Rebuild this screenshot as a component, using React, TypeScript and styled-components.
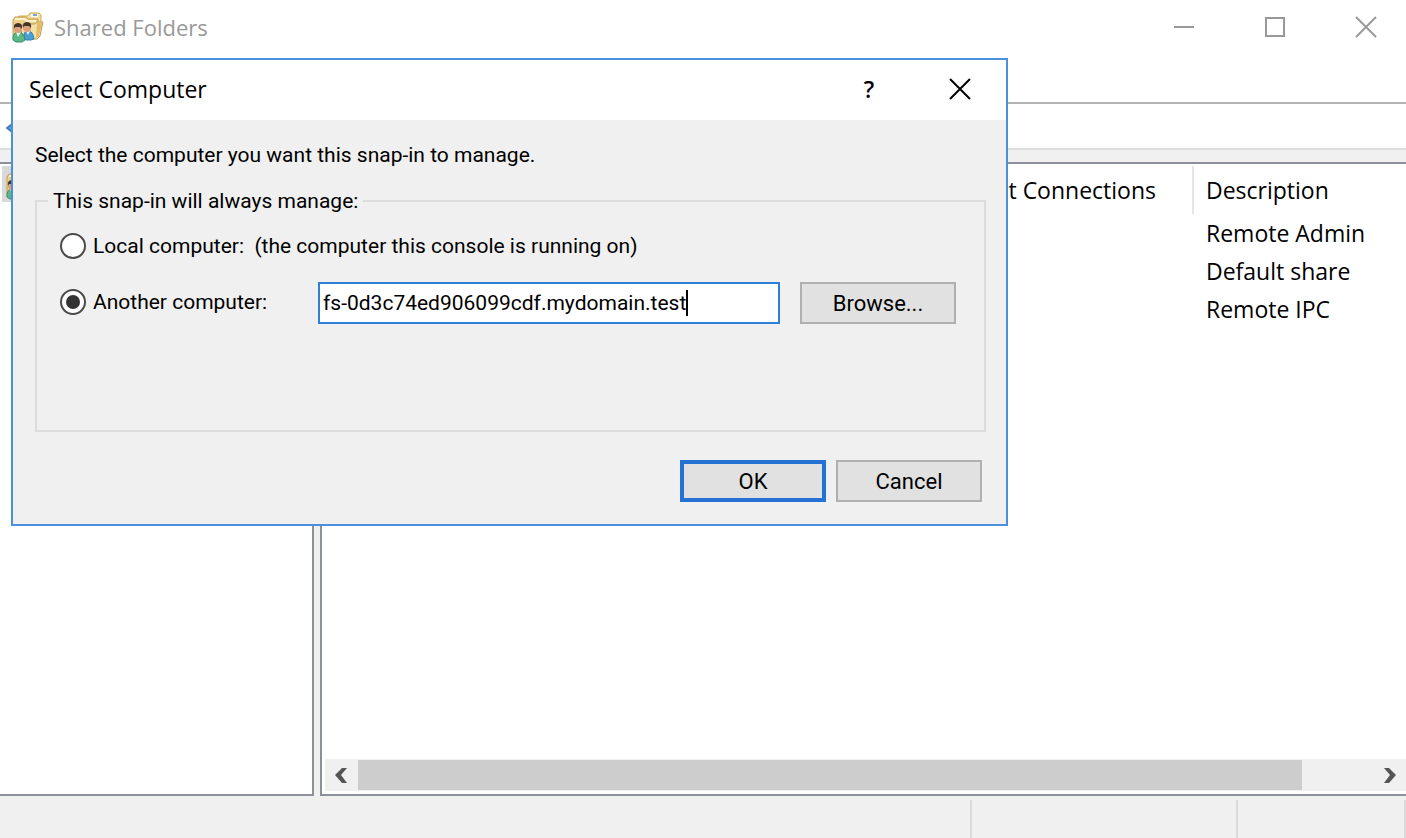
import React, { useState } from "react";
import styled, { createGlobalStyle } from "styled-components";

const GlobalStyle = createGlobalStyle`
  *, *::before, *::after { box-sizing: border-box; }
  body { margin: 0; background: #fff; }
  button, input { font: inherit; color: inherit; }
`;

const uiFont = `"Open Sans", "Noto Sans", sans-serif`;
const dialogFont = `Roboto, "Liberation Sans", sans-serif`;

const AppWindow = styled.div`
  position: relative;
  display: flex;
  flex-direction: column;
  min-height: 100vh;
  overflow: hidden;
  background: #fff;
  color: #000;
  font: 23px/28px ${uiFont};
`;

const TitleBar = styled.header`
  display: flex;
  align-items: center;
  height: 54px;
  padding: 0 3px 0 12px;
  color: #999;
`;

const WindowTitle = styled.h1`
  flex: 1;
  margin: 0 0 0 10px;
  font-size: 22px;
  font-weight: 400;
`;

const CaptionButtons = styled.div`
  display: flex;
  gap: 17px;
`;

const CaptionButton = styled.button<{ $bold?: boolean }>`
  display: flex;
  align-items: center;
  justify-content: center;
  width: 74px;
  height: 52px;
  padding: 0;
  border: 0;
  background: none;
  font-weight: ${(p) => (p.$bold ? 600 : 400)};
`;

const MenuBar = styled.div`
  height: 50px;
  border-bottom: 2px solid #b4b4b4;
`;

const Toolbar = styled.div`
  display: flex;
  align-items: center;
  height: 46px;
  padding: 4px 0 0 6px;
  border-bottom: 2px solid #dedede;
`;

const ToolButton = styled.button`
  display: flex;
  padding: 0;
  border: 0;
  background: none;
`;

const Workspace = styled.main`
  display: flex;
  flex: 1;
  gap: 6px;
  padding-top: 12px;
  background: #f0f0f0;
`;

const TreePane = styled.nav`
  width: 314px;
  padding: 2px;
  border: 2px solid #8c9099;
  border-left: 0;
  background: #fff;
`;

const TreeItem = styled.button`
  display: flex;
  align-items: center;
  height: 36px;
  padding: 0 4px;
  border: 0;
  background: #d9d9d9;
`;

const ListPane = styled.section`
  display: flex;
  flex: 1;
  flex-direction: column;
  justify-content: space-between;
  padding: 2px 0 3px;
  border: 2px solid #8c9099;
  border-right: 0;
  background: #fff;
`;

const ShareTable = styled.table`
  width: 100%;
  border-collapse: separate;
  border-spacing: 0;
  th { font-weight: 400; }
`;

const HeadCell = styled.th<{ $last?: boolean }>`
  width: ${(p) => (p.$last ? "214px" : "auto")};
  height: 48px;
  padding: ${(p) => (p.$last ? "0 0 0 12px" : "0 36px 0 0")};
  border-left: ${(p) => (p.$last ? "2px solid #e5e5e5" : "0")};
  text-align: ${(p) => (p.$last ? "left" : "right")};
`;

const BodyCell = styled.td`
  height: 38px;
  padding: 0 0 0 14px;
`;

const ScrollBar = styled.div`
  display: flex;
  height: 32px;
  margin-left: 3px;
  background: #f0f0f0;
`;

const ScrollButton = styled.button`
  display: flex;
  align-items: center;
  justify-content: center;
  width: 33px;
  padding: 0;
  border: 0;
  background: none;
`;

const ScrollTrack = styled.div`
  flex: 1;
  padding: 1px 0;
`;

const ScrollThumb = styled.div`
  width: 93%;
  height: 30px;
  background: #cdcdcd;
`;

const StatusBar = styled.footer`
  display: flex;
  height: 42px;
  padding-top: 4px;
  background: #f0f0f0;
`;

const StatusCell = styled.div<{ $width?: number }>`
  flex: ${(p) => (p.$width ? `0 0 ${p.$width}px` : "1")};
  border-right: 2px solid #d9d9d9;
`;

const Dialog = styled.div`
  position: absolute;
  top: 58px;
  left: 11px;
  width: 997px;
  max-width: calc(100% - 22px);
  border: 2px solid #4a90dc;
  background: #f0f0f0;
  font-family: ${dialogFont};
  font-size: 21px;
`;

const DialogTitleBar = styled.div`
  display: flex;
  align-items: center;
  height: 60px;
  padding: 0 9px 3px 16px;
  background: #fff;
  font-family: ${uiFont};
  font-size: 23px;
`;

const DialogTitle = styled.h2`
  flex: 1;
  margin: 0;
  font-size: 23px;
  font-weight: 400;
`;

const DialogBody = styled.form`
  padding: 21px 20px 22px 22px;
`;

const Prompt = styled.p`
  margin: 0;
`;

const Group = styled.fieldset`
  height: 245px;
  margin: 18px 0 28px;
  padding: 11px 28px 0 23px;
  border: 2px solid #dcdcdc;
`;

const GroupLegend = styled.legend`
  margin-left: -12px;
  padding: 0 5px;
`;

const OptionRow = styled.div`
  display: flex;
  align-items: flex-start;
  height: 42px;
  margin-bottom: 14px;
`;

const Option = styled.label<{ $width?: number }>`
  display: flex;
  align-items: center;
  gap: 7px;
  width: ${(p) => (p.$width ? `${p.$width}px` : "auto")};
  height: 40px;
  white-space: pre;
`;

const Radio = styled.input`
  appearance: none;
  display: grid;
  place-items: center;
  width: 26px;
  height: 26px;
  margin: 0;
  border: 2px solid #4a4a4a;
  border-radius: 50%;
  background: #fff;
  &:checked::before {
    content: "";
    width: 14px;
    height: 14px;
    border-radius: 50%;
    background: #333;
  }
`;

const Field = styled.label`
  display: flex;
  flex: 1;
  align-items: center;
  height: 42px;
  margin-right: 20px;
  padding: 0 3px;
  border: 2px solid #2f7fd6;
  background: #fff;
  cursor: text;
`;

const FieldInput = styled.input`
  field-sizing: content;
  min-width: 1px;
  padding: 0;
  border: 0;
  outline: 0;
  background: none;
  caret-color: transparent;
`;

const Caret = styled.span`
  width: 2px;
  height: 26px;
  background: #000;
`;

const PushButton = styled.button<{ $width: number; $primary?: boolean }>`
  width: ${(p) => p.$width}px;
  height: 42px;
  padding: 2px 0 0;
  border: ${(p) => (p.$primary ? "4px solid #2472d4" : "2px solid #b0b0b0")};
  background: #e1e1e1;
  font-size: 22px;
`;

const Actions = styled.div`
  display: flex;
  justify-content: flex-end;
  gap: 10px;
  padding-right: 4px;
`;

const SharedFolderIcon = () => (
  <svg width="32" height="32" viewBox="0 0 32 32" aria-hidden="true">
    <path d="M5 8 L7 5 H16 L18 2 H27 L29 4 V14 H5Z" fill="#f3dfa4" stroke="#cfa956" />
    <path d="M19 3 H26 V6 H19Z" fill="#fff9e6" />
    <path d="M21 3 H25 V5 H21Z" fill="#6fa9dc" />
    <path d="M1 9 L3 6 H14 L16 8 H26 V27 H3 L1 25Z" fill="#eed08a" stroke="#c49a48" />
    <path d="M3 8 H13 L15 10 H24" fill="none" stroke="#fbf0cc" strokeWidth="2" />
    <path d="M9 15 L13 13 H23 L25 11 H31 L28 25 L25 28 H10Z" fill="#f4dfa6" stroke="#c49a48" />
    <path d="M25 12 H30 L27 25 L24 27Z" fill="#e0bd6c" />
    <path d="M12 28 Q11 20 16 20 Q21 20 22 28 L19 29 H14Z" fill="#4b9fd6" stroke="#2d7fb5" />
    <path d="M14 20 L16 24 L18 20Z" fill="#f4f8fb" />
    <ellipse cx="15" cy="17" rx="4" ry="4" fill="#d9a27c" />
    <path d="M11 17 Q10 11 15 11 Q20 11 19 17 L17 15 L12 15Z" fill="#43342c" />
    <path d="M1 29 Q0 22 6 21 Q12 21 13 29 L10 31 H4Z" fill="#5cb887" stroke="#398b63" />
    <path d="M4 21 L6 26 L9 21Z" fill="#e9f7ef" />
    <ellipse cx="6" cy="18" rx="4" ry="4" fill="#d9a27c" />
    <path d="M2 18 Q1 12 6 12 Q11 12 10 18 L8 16 L3 16Z" fill="#43342c" />
  </svg>
);

const CloseGlyph = () => (
  <svg width="22" height="22" viewBox="0 0 22 22" fill="none" stroke="currentColor" strokeWidth="2" aria-hidden="true">
    <path d="M1 1 L21 21 M21 1 L1 21" />
  </svg>
);

const ScrollArrow = ({ right }: { right?: boolean }) => (
  <svg width="13" height="15" viewBox="0 0 13 15" fill="#555" aria-hidden="true">
    <path d={right ? "M1 0 H6 L13 7 L6 15 H1 L7 7Z" : "M12 0 H7 L0 7 L7 15 H12 L6 7Z"} />
  </svg>
);

const shares = ["Remote Admin", "Default share", "Remote IPC"];

export default function App() {
  const [target, setTarget] = useState("another");
  const [host, setHost] = useState("fs-0d3c74ed906099cdf.mydomain.test");

  return (
    <AppWindow>
      <GlobalStyle />
      <TitleBar>
        <SharedFolderIcon />
        <WindowTitle>Shared Folders</WindowTitle>
        <CaptionButtons>
          <CaptionButton aria-label="Minimize">
            <svg width="20" height="2" aria-hidden="true"><path d="M0 1H20" stroke="#999" strokeWidth="2" /></svg>
          </CaptionButton>
          <CaptionButton aria-label="Maximize">
            <svg width="20" height="20" aria-hidden="true"><path d="M1 1H19V19H1Z" fill="none" stroke="#999" strokeWidth="2" /></svg>
          </CaptionButton>
          <CaptionButton aria-label="Close"><CloseGlyph /></CaptionButton>
        </CaptionButtons>
      </TitleBar>
      <MenuBar />
      <Toolbar>
        <ToolButton aria-label="Back">
          <svg width="24" height="18" viewBox="0 0 24 18" aria-hidden="true">
            <path d="M1 9 L5 6 L9 2 V6 H23 V12 H9 V16 L5 12Z" fill="#5aa5e2" stroke="#3f7fb8" strokeWidth="2" strokeLinejoin="round" />
          </svg>
        </ToolButton>
      </Toolbar>
      <Workspace>
        <TreePane>
          <TreeItem aria-label="Shared folders root"><SharedFolderIcon /></TreeItem>
        </TreePane>
        <ListPane>
          <ShareTable>
            <thead>
              <tr>
                <HeadCell># Client Connections</HeadCell>
                <HeadCell $last>Description</HeadCell>
              </tr>
            </thead>
            <tbody>
              {shares.map((description) => (
                <tr key={description}>
                  <BodyCell />
                  <BodyCell>{description}</BodyCell>
                </tr>
              ))}
            </tbody>
          </ShareTable>
          <ScrollBar>
            <ScrollButton aria-label="Scroll left"><ScrollArrow /></ScrollButton>
            <ScrollTrack><ScrollThumb /></ScrollTrack>
            <ScrollButton aria-label="Scroll right"><ScrollArrow right /></ScrollButton>
          </ScrollBar>
        </ListPane>
      </Workspace>
      <StatusBar>
        <StatusCell />
        <StatusCell $width={266} />
        <StatusCell $width={168} />
      </StatusBar>

      <Dialog role="dialog" aria-labelledby="dialog-title">
        <DialogTitleBar>
          <DialogTitle id="dialog-title">Select Computer</DialogTitle>
          <CaptionButtons>
            <CaptionButton $bold aria-label="Help">?</CaptionButton>
            <CaptionButton aria-label="Close dialog"><CloseGlyph /></CaptionButton>
          </CaptionButtons>
        </DialogTitleBar>
        <DialogBody onSubmit={(e) => e.preventDefault()}>
          <Prompt>Select the computer you want this snap-in to manage.</Prompt>
          <Group>
            <GroupLegend>This snap-in will always manage:</GroupLegend>
            <OptionRow>
              <Option>
                <Radio type="radio" name="target" checked={target === "local"} onChange={() => setTarget("local")} />
                {"Local computer:  (the computer this console is running on)"}
              </Option>
            </OptionRow>
            <OptionRow>
              <Option $width={258}>
                <Radio type="radio" name="target" checked={target === "another"} onChange={() => setTarget("another")} />
                Another computer:
              </Option>
              <Field>
                <FieldInput aria-label="Computer name" value={host} onChange={(e) => setHost(e.target.value)} />
                <Caret />
              </Field>
              <PushButton type="button" $width={156}>Browse...</PushButton>
            </OptionRow>
          </Group>
          <Actions>
            <PushButton type="submit" $width={146} $primary>OK</PushButton>
            <PushButton type="button" $width={146}>Cancel</PushButton>
          </Actions>
        </DialogBody>
      </Dialog>
    </AppWindow>
  );
}
